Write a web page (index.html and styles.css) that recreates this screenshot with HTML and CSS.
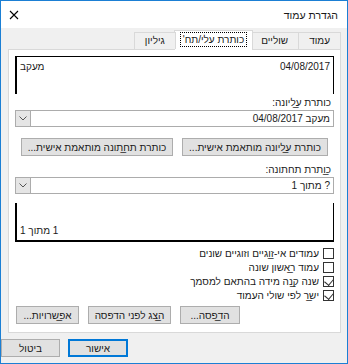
FILE: index.html
```html
<!DOCTYPE html>
<html lang="he" dir="rtl">
<head>
  <meta charset="UTF-8">
  <meta name="viewport" content="width=device-width, initial-scale=1.0">
  <title>הגדרת עמוד</title>
  <link rel="stylesheet" href="styles.css">
</head>
<body>
  <div class="dialog">
    <div class="titlebar">
      <span class="title">הגדרת עמוד</span>
      <span class="close">
        <svg width="10" height="10" viewBox="0 0 10 10"><path d="M1 1 L9 9 M9 1 L1 9" stroke="#000" stroke-width="1.1" fill="none"/></svg>
      </span>
    </div>

    <div class="tabs">
      <div class="tab">עמוד</div>
      <div class="tab">שוליים</div>
      <div class="tab active"><span class="focus">כותרת עלי/תח'</span></div>
      <div class="tab">גיליון</div>
    </div>

    <div class="panel">
      <div class="preview preview-top">
        <span>04/08/2017</span>
        <span>מעקב</span>
      </div>

      <div class="field-label">כותרת ע̲ליונה:</div>
      <div class="combo">
        <span class="combo-text">מעקב 04/08/2017</span>
        <span class="combo-btn">
          <svg width="8" height="5" viewBox="0 0 8 5"><path d="M0.5 0.5 L4 4 L7.5 0.5" stroke="#555" fill="none"/></svg>
        </span>
      </div>

      <div class="button-row custom-row">
        <button class="btn">כותרת ע̲ליונה מותאמת אישית...</button>
        <button class="btn">כותרת תח̲תונה מותאמת אישית...</button>
      </div>

      <div class="field-label">כ̲ותרת תחתונה:</div>
      <div class="combo">
        <span class="combo-text">? מתוך 1</span>
        <span class="combo-btn">
          <svg width="8" height="5" viewBox="0 0 8 5"><path d="M0.5 0.5 L4 4 L7.5 0.5" stroke="#555" fill="none"/></svg>
        </span>
      </div>

      <div class="preview preview-bottom">
        <span>1 מתוך 1</span>
      </div>

      <div class="checks">
        <div class="check-row"><span class="box"></span>עמודים אי-ז̲וגיים וזוגיים שונים</div>
        <div class="check-row"><span class="box"></span>עמוד ר̲אשון שונה</div>
        <div class="check-row"><span class="box checked"></span>שנה ק̲נה מידה בהתאם למסמך</div>
        <div class="check-row"><span class="box checked"></span>יש̲ר לפי שולי העמוד</div>
      </div>

      <div class="button-row print-row">
        <button class="btn print">הד̲פסה...</button>
        <button class="btn preview-btn">ה̲צג לפני הדפסה</button>
        <button class="btn options">אפ̲שרויות...</button>
      </div>
    </div>

    <div class="footer">
      <button class="btn ok">אישור</button>
      <button class="btn cancel">ביטול</button>
    </div>
  </div>
</body>
</html>
```

FILE: styles.css
```css
/* Reset */
* {
  margin: 0;
  padding: 0;
  box-sizing: border-box;
}

body {
  font-family: "Liberation Sans", "DejaVu Sans", sans-serif;
  font-size: 10px;
  color: #1a1a1a;
  background: #fff;
}

/* Window frame */
.dialog {
  width: 348px;
  height: 364px;
  border: 1px solid #1b7fd4;
  background: #f0f0f0;
  display: flex;
  flex-direction: column;
}

.titlebar {
  height: 27px;
  background: #fff;
  display: flex;
  align-items: center;
  justify-content: space-between;
  padding: 0 9px 0 8px;
  font-size: 10.5px;
}

.close {
  display: flex;
  width: 10px;
  height: 10px;
}

/* Tabs */
.tabs {
  display: flex;
  align-items: flex-end;
  height: 21px;
  padding: 0 6px 0 0;
  position: relative;
  z-index: 1;
}

.tab {
  height: 17px;
  line-height: 15px;
  padding: 0 10px;
  border: 1px solid #d9d9d9;
  border-bottom: none;
  background: #f0f0f0;
  margin-left: -1px;
  white-space: nowrap;
}

.tab.active {
  height: 20px;
  margin-bottom: -1px;
  margin-right: -2px;
  margin-left: -2px;
  padding: 1px 5px 0;
  background: #fff;
}

.tab .focus {
  display: inline-block;
  border: 1px dotted #000;
  padding: 0 2px;
  line-height: 13px;
}

/* Tab page */
.panel {
  margin: 0 6px 0 7px;
  height: 284px;
  background: #fff;
  border: 1px solid #d9d9d9;
  padding: 6px 6px 0 6px;
  display: flex;
  flex-direction: column;
}

.preview {
  border: 1px solid #000;
  display: flex;
  justify-content: space-between;
  padding: 0 3px 0 3px;
}

.preview-top {
  height: 38px;
  border-bottom: none;
  border-left-width: 2px;
  padding-top: 4px;
}

.preview-bottom {
  height: 39px;
  margin-top: 9px;
  border-top: none;
  border-left-width: 2px;
  border-bottom-width: 2px;
  justify-content: flex-end;
  align-items: flex-end;
  padding-bottom: 4px;
}

.field-label {
  height: 15px;
  line-height: 15px;
  margin-top: 1px;
  padding-right: 3px;
}

.combo {
  height: 17px;
  border: 1px solid #acacac;
  display: flex;
  align-items: stretch;
}

.combo-text {
  flex: 1;
  line-height: 15px;
  padding-right: 3px;
}

.combo-btn {
  width: 15px;
  background: #e5e5e5;
  border-right: 1px solid #acacac;
  display: flex;
  align-items: center;
  justify-content: center;
}

/* Buttons */
.btn {
  font-family: inherit;
  font-size: 10px;
  height: 18px;
  padding: 0;
  background: #e1e1e1;
  border: 1px solid #adadad;
  color: #1a1a1a;
  line-height: 15px;
  white-space: nowrap;
}

.button-row {
  display: flex;
  gap: 9px;
}

.custom-row {
  margin-top: 11px;
  margin-bottom: 5px;
  padding-right: 6px;
}

.custom-row .btn:first-child { width: 146px; }
.custom-row .btn:last-child { width: 152px; }

.print-row {
  margin-top: 4px;
  justify-content: flex-end;
  padding-left: 1px;
}

.print { width: 60px; }
.preview-btn { width: 83px; }
.options { width: 63px; }

/* Checkboxes */
.checks {
  margin-top: 4px;
  display: flex;
  flex-direction: column;
}

.check-row {
  height: 14px;
  display: flex;
  align-items: center;
  gap: 4px;
}

.box {
  width: 11px;
  height: 11px;
  border: 1px solid #333;
  background: #fff;
  position: relative;
}

.box.checked::after {
  content: "";
  position: absolute;
  left: 2px;
  top: 0px;
  width: 5px;
  height: 7px;
  border: solid #333;
  border-width: 0 1px 1px 0;
  transform: rotate(40deg);
}

/* Dialog buttons */
.footer {
  display: flex;
  justify-content: flex-end;
  gap: 8px;
  padding: 6px 7px 0 0;
}

.ok {
  width: 60px;
  border-color: #0078d7;
  box-shadow: inset 0 0 0 1px #0078d7;
}

.cancel {
  width: 59px;
}
```
